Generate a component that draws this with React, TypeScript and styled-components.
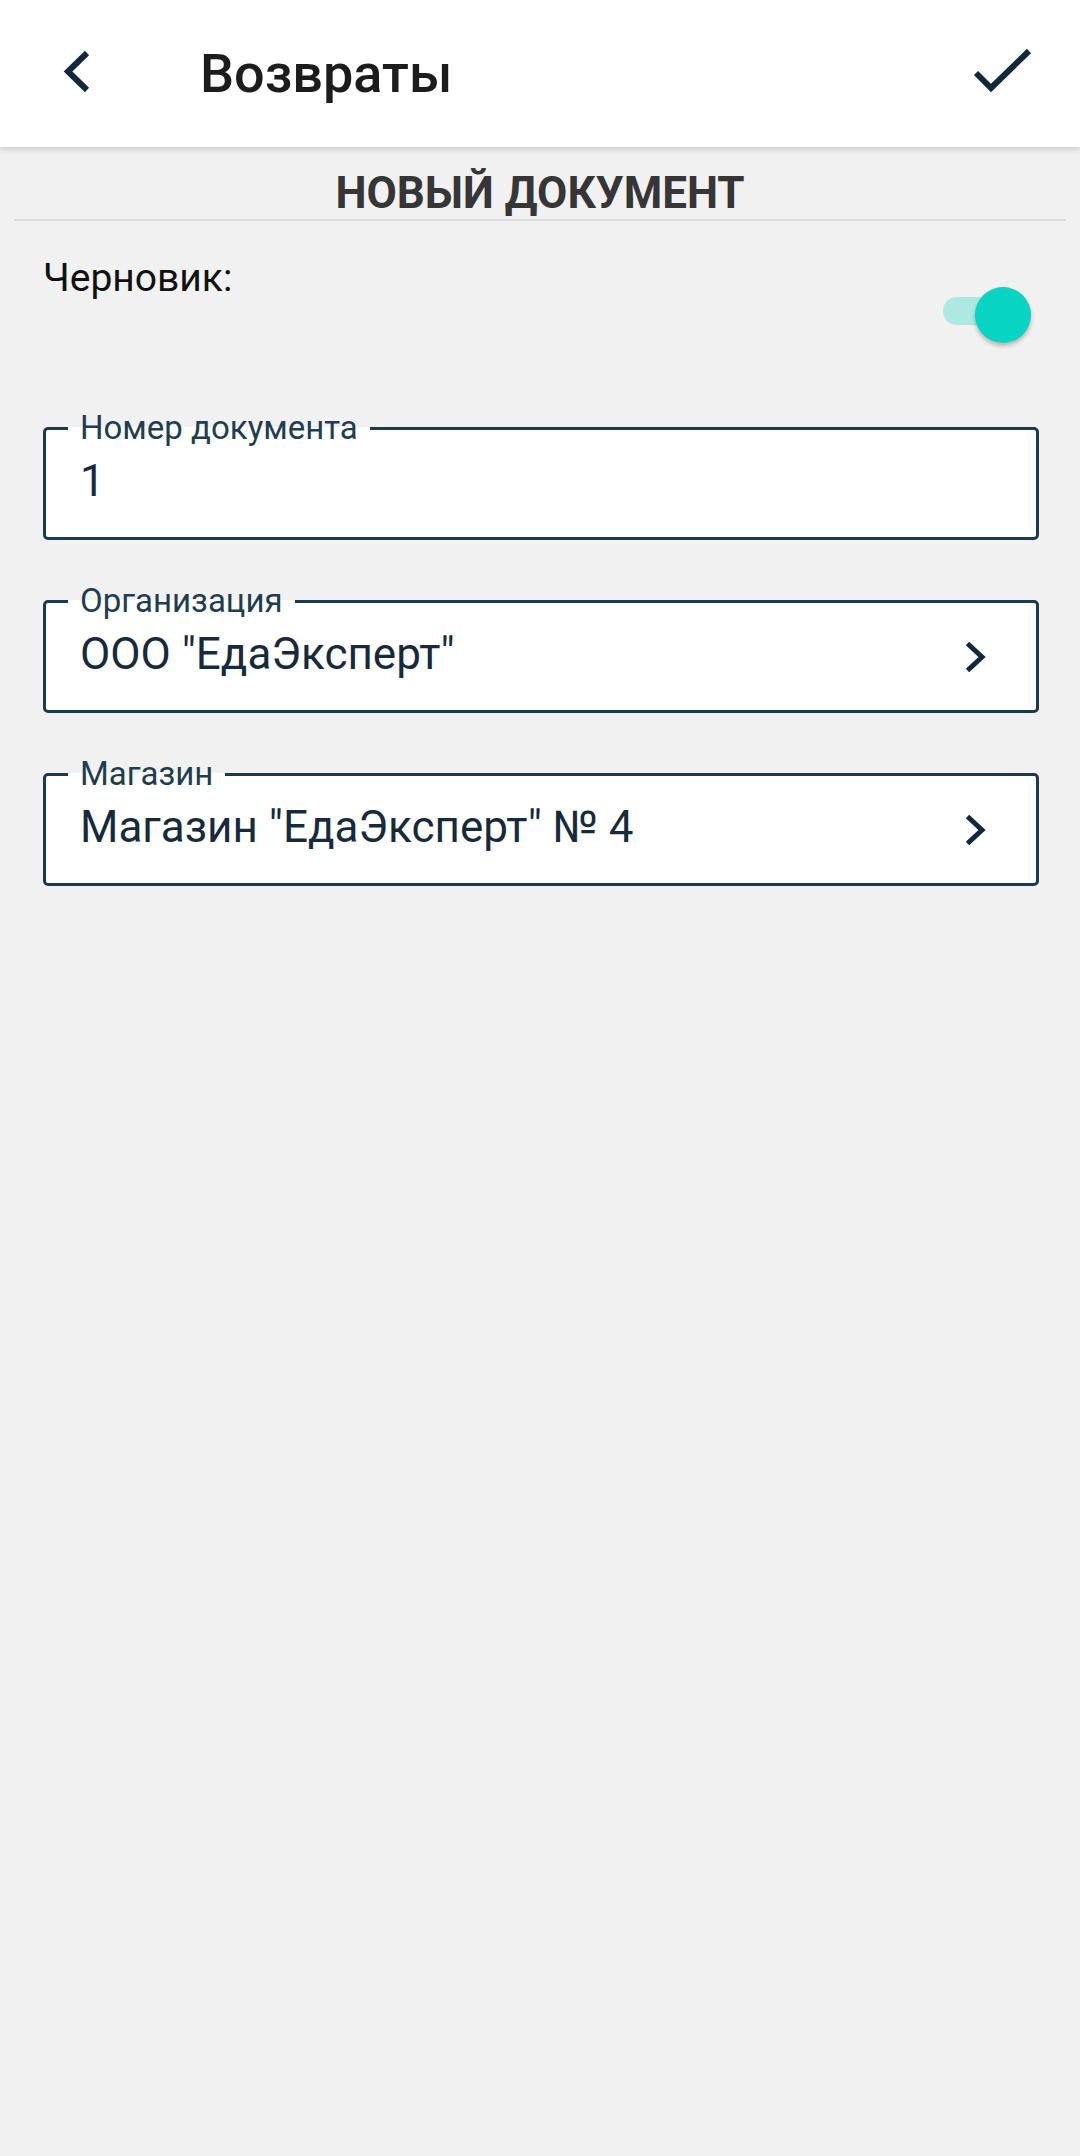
import React from "react";
import styled, { createGlobalStyle } from "styled-components";

const GlobalStyle = createGlobalStyle`
  html, body {
    margin: 0;
    padding: 0;
    background: #f1f1f1;
    font-family: Roboto, "Noto Sans", "Liberation Sans", sans-serif;
  }
  #root {
    min-height: 2156px;
    background: #f1f1f1;
  }
`;

const Screen = styled.div`
  display: flex;
  flex-direction: column;
  min-height: 2156px;
  background: #f1f1f1;
`;

const Header = styled.header`
  display: flex;
  align-items: center;
  height: 147px;
  background: #ffffff;
  box-shadow: 0 2px 6px rgba(0, 0, 0, 0.18);
  position: relative;
  z-index: 1;
`;

const IconButton = styled.button<{ $ml?: number; $mr?: number }>`
  display: flex;
  align-items: center;
  justify-content: center;
  padding: 0;
  border: none;
  background: transparent;
  margin-left: ${(p) => p.$ml ?? 0}px;
  margin-right: ${(p) => p.$mr ?? 0}px;
  color: #14283c;
`;

const Title = styled.h1`
  flex: 1;
  margin: 0 0 0 107px;
  font-size: 54px;
  line-height: 64px;
  font-weight: 500;
  color: #1c1c1c;
`;

const SectionTitle = styled.h2`
  margin: 20px 0 0;
  text-align: center;
  font-size: 44px;
  line-height: 52px;
  font-weight: 700;
  color: #363636;
`;

const Divider = styled.div`
  margin: 0 14px;
  height: 2px;
  background: #dcdcdc;
`;

const DraftRow = styled.div`
  display: flex;
  justify-content: space-between;
  align-items: flex-start;
  padding: 33px 49px 0 43px;
`;

const DraftLabel = styled.span`
  font-size: 39px;
  line-height: 48px;
  color: #111111;
`;

const Switch = styled.div`
  position: relative;
  width: 88px;
  height: 56px;
  margin-top: 33px;
`;

const Track = styled.div`
  margin-top: 10px;
  width: 76px;
  height: 28px;
  border-radius: 14px;
  background: #aee9e1;
`;

const Thumb = styled.div`
  position: absolute;
  right: 0;
  top: 0;
  width: 56px;
  height: 56px;
  border-radius: 50%;
  background: #07d4c2;
  box-shadow: 0 3px 4px rgba(0, 0, 0, 0.25);
`;

const Fields = styled.div`
  display: flex;
  flex-direction: column;
  gap: 43px;
  padding: 67px 41px 0 43px;
`;

const Field = styled.fieldset`
  margin: 0;
  min-width: 0;
  padding: 10px 49px 31px 34px;
  border: 3px solid #1c3a4f;
  border-radius: 5px;
  background: #ffffff;
`;

const Legend = styled.legend`
  padding: 0 12px;
  margin-left: -12px;
  font-size: 33px;
  line-height: 36px;
  color: #1f3d51;
`;

const ValueRow = styled.div`
  display: flex;
  align-items: center;
  justify-content: space-between;
  height: 50px;
`;

const Value = styled.span`
  font-size: 44px;
  line-height: 50px;
  color: #172a3b;
`;

const Chevron = styled.svg`
  margin-top: 5px;
  flex: none;
`;

const BackIcon = () => (
  <svg width="30" height="52" viewBox="0 0 30 52">
    <polyline
      points="24,5 5,23.5 24,42"
      fill="none"
      stroke="#14283c"
      strokeWidth="6"
      strokeLinecap="butt"
      strokeLinejoin="miter"
    />
  </svg>
);

const CheckIcon = () => (
  <svg width="64" height="56" viewBox="0 0 64 56">
    <polyline
      points="6,27 21,42 59,5"
      fill="none"
      stroke="#14283c"
      strokeWidth="6"
      strokeLinecap="butt"
      strokeLinejoin="miter"
    />
  </svg>
);

const ChevronRight = () => (
  <Chevron width="24" height="36" viewBox="0 0 24 36">
    <polyline
      points="4.5,4.5 19,18 4.5,31.5"
      fill="none"
      stroke="#14283c"
      strokeWidth="5"
      strokeLinecap="butt"
      strokeLinejoin="miter"
    />
  </Chevron>
);

type FieldData = { label: string; value: string; link?: boolean };

const fields: FieldData[] = [
  { label: "Номер документа", value: "1" },
  { label: "Организация", value: 'ООО "ЕдаЭксперт"', link: true },
  { label: "Магазин", value: 'Магазин "ЕдаЭксперт" № 4', link: true },
];

export default function App() {
  return (
    <>
      <GlobalStyle />
      <Screen>
        <Header>
          <IconButton $ml={63}>
            <BackIcon />
          </IconButton>
          <Title>Возвраты</Title>
          <IconButton $mr={46}>
            <CheckIcon />
          </IconButton>
        </Header>
        <SectionTitle>НОВЫЙ ДОКУМЕНТ</SectionTitle>
        <Divider />
        <DraftRow>
          <DraftLabel>Черновик:</DraftLabel>
          <Switch>
            <Track />
            <Thumb />
          </Switch>
        </DraftRow>
        <Fields>
          {fields.map((f) => (
            <Field key={f.label}>
              <Legend>{f.label}</Legend>
              <ValueRow>
                <Value>{f.value}</Value>
                {f.link && <ChevronRight />}
              </ValueRow>
            </Field>
          ))}
        </Fields>
      </Screen>
    </>
  );
}
